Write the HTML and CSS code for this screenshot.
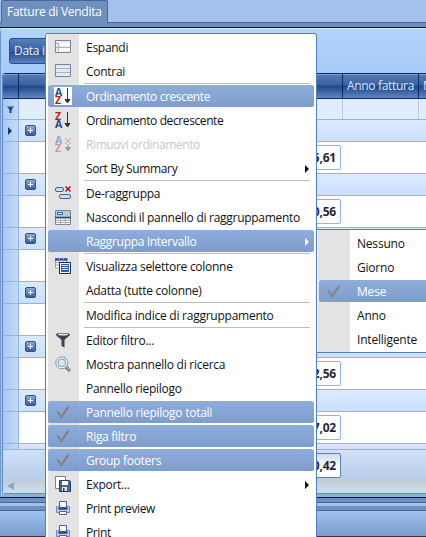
FILE: index.html
```html
<!DOCTYPE html>
<html lang="it">
<head>
<meta charset="utf-8">
<title>Fatture di Vendita</title>
<link rel="stylesheet" href="styles.css">
</head>
<body>
<svg class="defs" width="0" height="0">
  <defs>
    <linearGradient id="blue" x1="0" y1="0" x2="0" y2="1"><stop offset="0" stop-color="#8dafe0"/><stop offset="1" stop-color="#35599f"/></linearGradient>
    <symbol id="check" viewBox="0 0 16 16"><path d="M2.2 7.4 6.3 13 13.6 2.6" fill="none" stroke="#858585" stroke-width="2.2"/></symbol>
    <symbol id="printer" viewBox="0 0 16 16">
      <path d="M1.500 6.500h2v3h9v-3h2v6h-13z" fill="#b9cbe8" stroke="#7089b8"/>
      <path d="M4.500 1.500h7v6h-7z" fill="#f7faff" stroke="#4f628e"/>
      <path d="M4 8.500h8" stroke="#26437f" stroke-width="2"/>
      <path d="M4.500 11.500h7v3h-7z" fill="#fff" stroke="#4f628e"/>
    </symbol>
    <symbol id="plus" viewBox="0 0 11 11"><rect x=".5" y=".5" width="10" height="10" rx="1.5" fill="url(#blue)" stroke="#2f5290"/><path d="M3 5.5h5M5.5 3v5" stroke="#fff"/></symbol>
  </defs>
</svg>

<header class="tabs"><div class="tab">Fatture di Vendita</div></header>
<div class="tabline"></div>

<main class="panel">
  <div class="grouping"><div class="groupkey">Data i</div></div>
  <div class="grid">
    <div class="head"><span class="ind"></span><span class="main"></span><span class="year">Anno fattura</span><span class="next">M</span></div>
    <div class="filter"><span class="ind"><svg width="7" height="7"><path d="M0 .5h7M1 1.5h5L4.200 4v3H2.800V4z" fill="#1d3e72" stroke="#1d3e72" stroke-width=".5"/></svg></span><span class="main"></span><span class="year"></span><span class="next"></span></div>
    <div class="group"><span class="ind"><svg width="5" height="8"><path d="M0 0 4 4 0 8z" fill="#173767"/></svg></span><svg class="plus"><use href="#plus"/></svg></div>
    <div class="data"><span class="ind"></span><b class="total">1.045,61</b></div>
    <div class="group"><span class="ind"></span><svg class="plus"><use href="#plus"/></svg></div>
    <div class="data"><span class="ind"></span><b class="total">1.120,56</b></div>
    <div class="group"><span class="ind"></span><svg class="plus"><use href="#plus"/></svg></div>
    <div class="data"><span class="ind"></span></div>
    <div class="group"><span class="ind"></span><svg class="plus"><use href="#plus"/></svg></div>
    <div class="data"><span class="ind"></span></div>
    <div class="group"><span class="ind"></span><svg class="plus"><use href="#plus"/></svg></div>
    <div class="data"><span class="ind"></span><b class="total">1.332,56</b></div>
    <div class="group"><span class="ind"></span><svg class="plus"><use href="#plus"/></svg></div>
    <div class="data"><span class="ind"></span><b class="total">1.217,02</b></div>
    <div class="group cut"><span class="ind"></span><svg class="plus"><use href="#plus"/></svg></div>
    <div class="foot"><b class="total">9.540,42</b></div>
    <div class="scroll"><svg width="7" height="8"><path d="M7 0v8L0 4z" fill="#8fa6c6"/></svg></div>
  </div>
</main>
<footer class="bottom"><div class="b1"></div><div class="b2"></div><div class="b3"></div><div class="b4"></div></footer>

<nav class="menu">
  <div class="item"><svg class="icon" viewBox="0 0 16 16"><path d="M.5 1.500h15v12H.5z" fill="#e9edf3" stroke="#7985a0"/><path d="M4 4h11v3H4zM4 9h11v3H4z" fill="#fff"/><path d="M1 4.500h3M1 8.500h14M3.500 4v8" stroke="#a7b2c4" fill="none"/></svg><span>Espandi</span></div>
  <div class="item"><svg class="icon" viewBox="0 0 16 16"><path d="M.5 1.500h15v12H.5z" fill="#e5eaf1" stroke="#7985a0"/><path d="M1 5.500h14M1 9.500h14" stroke="#a7b2c4"/></svg><span>Contrai</span></div>
  <hr>
  <div class="item on tight"><span class="icon sort lit"><span class="az"><i class="a">A</i><i class="z">Z</i></span><svg width="7" height="16"><path d="M3.500 0v12M1 11.500h5L3.500 15z" stroke="#333" fill="#333"/></svg></span><span>Ordinamento crescente</span></div>
  <div class="item tight"><span class="icon sort"><span class="az"><i class="z">Z</i><i class="a">A</i></span><svg width="7" height="16"><path d="M3.500 0v12M1 11.500h5L3.500 15z" stroke="#333" fill="#333"/></svg></span><span>Ordinamento decrescente</span></div>
  <div class="item off tight"><span class="icon sort"><span class="az"><i class="a">A</i><i class="z">Z</i></span><svg width="8" height="16"><path d="M1 2l6 6M7 2 1 8" stroke="#b33"/><path d="M4 8v4M1.500 11.500h5L4 15z" stroke="#333" fill="#333"/></svg></span><span>Rimuovi ordinamento</span></div>
  <div class="item wide"><i class="icon"></i><span>Sort By Summary</span><svg class="arrow"><path d="M0 0 4 4 0 8z"/></svg></div>
  <hr>
  <div class="item"><svg class="icon" viewBox="0 0 16 16"><rect x=".5" y="2.500" width="8" height="4" rx="1.500" fill="#c6dbf4" stroke="#47648f"/><rect x="4.500" y="9.500" width="11" height="4" rx="1.500" fill="#c6dbf4" stroke="#47648f"/><path d="M10.500 1.500l5 5M15.500 1.500l-5 5" stroke="#a51220" stroke-width="1.500"/></svg><span>De-raggruppa</span></div>
  <div class="item"><svg class="icon" viewBox="0 0 16 16"><path d="M.5 1.500h15v14H.5z" fill="#fff" stroke="#76859b"/><path d="M1 2h14v5H1z" fill="#b6cbd8"/><path d="M2.500 3.500h5v2h-5z" fill="#fff" stroke="#2f608c"/><path d="M0 8.500h16" stroke="#34506d" stroke-width="2"/><path d="M1 11.500h14M1 13.500h14M5.500 9v7M10.500 9v7" stroke="#a4adb9"/></svg><span>Nascondi il pannello di raggruppamento</span></div>
  <div class="item on"><i class="icon"></i><span>Raggruppa intervallo</span><svg class="arrow"><path d="M0 0 4 4 0 8z"/></svg></div>
  <hr>
  <div class="item"><svg class="icon" viewBox="0 0 16 16"><path d="M.5 1h11v9H.5z" fill="#fff" stroke="#9ba8bb"/><path d="M0 1.500h12.500" stroke="#2a4e91" stroke-width="2.500"/><path d="M0 4.500h12M0 7h6M4.500 0v10M8.500 0v5" stroke="#8a9ab4"/><path d="M4.500 4.500h11v11h-11z" fill="#fff" stroke="#20283b"/><path d="M6.500 6.500h7v7h-7z" fill="#dce7f8" stroke="#3159a1"/><path d="M7 8.500h6M7 10.500h6M7 12.500h6" stroke="#3159a1"/></svg><span>Visualizza selettore colonne</span></div>
  <div class="item"><i class="icon"></i><span>Adatta (tutte colonne)</span></div>
  <hr>
  <div class="item loose"><i class="icon"></i><span>Modifica indice di raggruppamento</span></div>
  <hr>
  <div class="item"><svg class="icon" viewBox="0 0 16 16"><path d="M1 2.500C1 .6 15 .6 15 2.500 15 4 9.500 7 9.500 8.500V15.500l-3-1.500V8.500C6.500 7 1 4 1 2.500z" fill="#3b434e"/><ellipse cx="8" cy="2.600" rx="5.200" ry="1" fill="#dce4eb"/></svg><span>Editor filtro...</span></div>
  <div class="item loose"><svg class="icon" viewBox="0 0 16 16"><path d="M10.500 10.500 15 15" stroke="#707780" stroke-width="3.200"/><path d="M11 10.500l3.800 3.800" stroke="#e2e5e8" stroke-width="1"/><circle cx="6.800" cy="6.800" r="6" fill="#f7f7f7" stroke="#8c9197"/><circle cx="6.800" cy="6.800" r="3.900" fill="#ceeaf5" stroke="#8097aa"/></svg><span>Mostra pannello di ricerca</span></div>
  <div class="item"><i class="icon"></i><span>Pannello riepilogo</span></div>
  <div class="item on loose"><svg class="icon"><use href="#check"/></svg><span>Pannello riepilogo totali</span></div>
  <div class="item on"><svg class="icon"><use href="#check"/></svg><span>Riga filtro</span></div>
  <div class="item on"><svg class="icon"><use href="#check"/></svg><span>Group footers</span></div>
  <div class="item"><svg class="icon" viewBox="0 0 16 16"><path d="M.5.5h10v12H.5z" fill="#fff" stroke="#71809d"/><path d="M4.500 4.500h10l1 1v10h-11z" fill="#4a6791" stroke="#283c5f"/><path d="M7 5h6v4H7z" fill="#fff"/><path d="M7 11h5v4H7z" fill="#dbe4ef"/><path d="M8 12h1.500v3H8z" fill="#283c5f"/></svg><span>Export...</span><svg class="arrow"><path d="M0 0 4 4 0 8z"/></svg></div>
  <div class="item wide"><svg class="icon"><use href="#printer"/></svg><span>Print preview</span></div>
  <div class="item wide"><svg class="icon"><use href="#printer"/></svg><span>Print</span></div>
</nav>

<nav class="menu sub">
  <div class="item"><i class="icon"></i><span>Nessuno</span></div>
  <div class="item"><i class="icon"></i><span>Giorno</span></div>
  <div class="item on"><svg class="icon"><use href="#check"/></svg><span>Mese</span></div>
  <div class="item"><i class="icon"></i><span>Anno</span></div>
  <div class="item"><i class="icon"></i><span>Intelligente</span></div>
</nav>
</body>
</html>
```
FILE: styles.css
```css
* { box-sizing: border-box; }
html, body { margin: 0; height: 537px; overflow: hidden; }
body { position: relative; width: 426px; background: #a3c1ea; font: 12px/16px "Open Sans", "Noto Sans", sans-serif; color: #111; }
.defs { position: absolute; }

.tabs { height: 22px; padding-left: 1px; }
.tab { width: 107px; height: 23px; border: 1px solid #46689c; border-bottom: 0; border-radius: 2px 2px 0 0; background: #6f8fbd; color: #fff; padding: 3px 0 0 5px; white-space: nowrap; position: relative; letter-spacing: -.28px; }
.tabline { height: 6px; background: #6f8fbd; border-top: 1px solid #46689c; border-bottom: 1px solid #00174a; }

.panel { height: 469px; padding: 0 0 0 2px; border-top: 1px solid #d8eaff; border-radius: 4px 0 0 0; background: linear-gradient(90deg, #7397c7 0 1px, #a9c8f3 1px 2px, transparent 2px), linear-gradient(#b0d4fe, #a7cbf7 45px, #8fb0da); }
.grouping { height: 44px; padding: 9px 0 0 7px; }
.groupkey { width: 100px; height: 26px; border: 1px solid #264d8c; border-radius: 3px; background: linear-gradient(#567fbc, #375f9f 50%, #274d8c 55%, #5a83c1); color: #e8f1ff; padding: 4px; letter-spacing: -.3px; }
.grid { border-left: 1px solid #5d8ac4; height: 421px; display: flex; flex-direction: column; border-radius: 3px 0 0 4px; overflow: hidden; background: #fff; }
.grid > div { display: flex; flex: none; }
.ind { width: 16px; flex: none; border-right: 1px solid #8fb4e6; background: linear-gradient(90deg, #a9c8f2, #c3daf9); display: flex; align-items: center; justify-content: center; }
.main { width: 324px; flex: none; }
.year { width: 76px; flex: none; }
.next { flex: 1; overflow: hidden; }
.head { height: 26px; border-top: 1px solid #0b2c66; border-bottom: 1px solid #0b2c66; background: linear-gradient(#7ba0d4 0 1px, #5479b6 1px, #3b62a2 45%, #234884 50%, #30589b 65%, #6087c3); color: #cfe6ff; letter-spacing: -.32px; }
.head span { padding: 4px 0 0 4px; border-right: 1px solid #0b2c66; white-space: nowrap; }
.head .ind { background: none; }
.head .next { border-right: 0; }
.filter { height: 20px; background: #e0edfd; }
.filter .main, .filter .year { border-right: 1px solid #bccbe0; }
.group { height: 23px; border-top: 1px solid #8fb4e6; border-bottom: 1px solid #8fb4e6; background: linear-gradient(#dbeaff, #cbe0fe); align-items: stretch; }
.plus { width: 11px; height: 11px; margin: 5px 0 0 6px; flex: none; }
.data { height: 31px; background: #fff; }
.total { margin: 3px 0 0 232px; width: 90px; height: 25px; border: 1px solid #8fb4e6; border-radius: 2px; text-align: right; padding: 4px 4px 0 0; color: #262631; background: #fff; letter-spacing: -.2px; }
.cut { height: 6px; overflow: hidden; border-bottom: 0; }
.foot { height: 31px; border-top: 1px solid #8fb4e6; background: linear-gradient(#cfe1fa, #b8cde8); }
.foot .total { margin-left: 248px; border-color: #5c84bc; background: linear-gradient(#cddcea, #fff 60%); }
.scroll { height: 14px; background: linear-gradient(#bfccd8, #d0dfec); border-bottom: 1px solid #6489bb; padding: 2px 0 0 4px; }

.bottom { height: 40px; display: flex; flex-direction: column; }
.b1 { height: 6px; border-top: 1px solid #001540; border-bottom: 1px solid #46689c; background: #6f8fbd; }
.b2 { height: 3px; background: #9fc2ef; }
.b3 { height: 5px; border-bottom: 1px solid #46689c; background: #6f8fbd; }
.b4 { height: 26px; background: linear-gradient(#9fc2ef, #7a9dce); border-bottom: 1px solid #36383c; }

.menu { position: absolute; left: 45px; top: 33px; width: 272px; height: 520px; border: 1px solid #4f7ec6; border-radius: 3px; padding: 1px 2px 1px 2px; background: linear-gradient(90deg, #fff 2px, #e3e3e3 2px 33px, #fff 33px); }
.item { height: 24px; border: solid transparent; border-width: 1px 0; background-clip: padding-box; display: flex; align-items: center; white-space: nowrap; border-radius: 2px; letter-spacing: -.28px; }
.item > span:not(.icon) { padding-top: 2px; }
.item.tight { letter-spacing: -.4px; }
.item.loose { letter-spacing: -.25px; }
.item.wide { letter-spacing: -.36px; }
.item.wide:nth-last-child(-n+2) { letter-spacing: -.38px; }
.item.on { background-image: linear-gradient(#8fadda, #7e9dcd); color: #fff; border-radius: 3px; }
.item.off { color: #c8c8c8; }
.icon { width: 16px; height: 16px; flex: none; margin: 0 15px 0 7px; }
.arrow { width: 4px; height: 8px; margin: 1px 5px 0 auto; fill: currentColor; }
hr { height: 1px; border: 0; margin: 0 4px 0 36px; background: #bdbdbd; }
.sort { display: flex; gap: 2px; }
.sort svg { flex: none; }
.lit { background: #fff; outline: 1px solid #fff; }
.az { display: flex; flex-direction: column; width: 7px; }
.az i { font: bold 10.5px/8px "Open Sans", sans-serif; letter-spacing: 0; }
.a { color: #174d91; }
.z { color: #bb1822; }
.off .sort { opacity: .4; }

.sub { left: 316px; top: 229px; width: 130px; height: 124px; border-width: 1px; border-radius: 0; background: linear-gradient(90deg, #fff 1px, #e3e3e3 1px 33px, #fff 33px); }
.sub .item { letter-spacing: -.2px; }
```
